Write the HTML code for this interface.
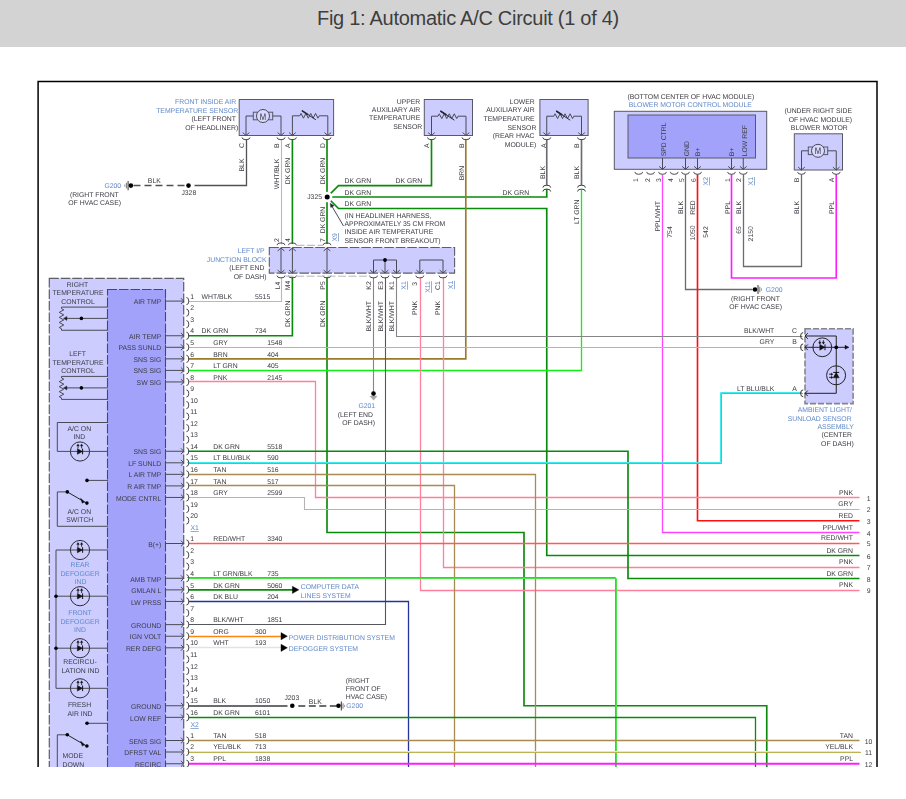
<!DOCTYPE html>
<html><head><meta charset="utf-8"><title>Fig 1: Automatic A/C Circuit (1 of 4)</title>
<style>
html,body{margin:0;padding:0;background:#fff;}
body{width:906px;height:799px;overflow:hidden;position:relative;font-family:"Liberation Sans",sans-serif;}
#hdr{position:absolute;left:0;top:0;width:906px;height:46.5px;background:#d3d3d3;}
#hdr span{position:absolute;left:0;width:936px;top:6px;text-align:center;font-size:20px;line-height:24px;color:#3e3e3e;letter-spacing:-0.28px;white-space:nowrap;}
#dia{position:absolute;left:0;top:0;width:906px;height:767px;overflow:hidden;}
svg{display:block;filter:blur(0.35px);}
</style></head><body>
<div id="hdr"><span>Fig 1: Automatic A/C Circuit (1 of 4)</span></div>
<div id="dia"><svg width="906" height="780" viewBox="0 0 906 780" font-family="Liberation Sans, sans-serif" text-rendering="geometricPrecision">
<g fill="none" stroke-linejoin="miter">
<path d="M246.50 139.50 L246.50 185.50 L194.50 185.50" stroke="#505056" stroke-width="1.3"/>
<path d="M184.50 185.50 L133.50 185.50" stroke="#505056" stroke-width="1.3" stroke-dasharray="7 4"/>
<path d="M281.50 139.50 L281.50 244.50" stroke="#b9b9b9" stroke-width="1.1"/>
<path d="M281.50 277.50 L281.50 301.50 L188.50 301.50" stroke="#b9b9b9" stroke-width="1.1"/>
<path d="M292.40 139.00 L292.40 244.00" stroke="#0a8a0a" stroke-width="1.65"/>
<path d="M292.40 277.00 L292.40 335.75 L188.00 335.75" stroke="#0a8a0a" stroke-width="1.65"/>
<path d="M327.00 139.00 L327.00 244.00" stroke="#0a8a0a" stroke-width="1.65"/>
<path d="M327.00 277.00 L327.00 532.50 L524.00 532.50 L524.00 705.75 L766.75 705.75 L766.75 770.00" stroke="#0a8a0a" stroke-width="1.65"/>
<path d="M327.00 197.00 L338.50 185.60 L431.50 185.60 L431.50 139.00" stroke="#0a8a0a" stroke-width="1.65"/>
<path d="M327.00 197.00 L546.75 197.00 L546.75 189.20" stroke="#0a8a0a" stroke-width="1.65"/>
<path d="M327.00 197.00 L338.50 208.50 L546.75 208.50 L546.75 555.50 L859.50 555.50" stroke="#0a8a0a" stroke-width="1.65"/>
<path d="M465.80 139.00 L465.80 358.85 L188.00 358.85" stroke="#9a7b2c" stroke-width="1.65"/>
<path d="M546.75 139.00 L546.75 185.30" stroke="#6c6c70" stroke-width="1.65"/>
<path d="M581.50 139.00 L581.50 185.30" stroke="#6c6c70" stroke-width="1.65"/>
<path d="M581.50 189.50 L581.50 370.50 L188.50 370.50" stroke="#10f010" stroke-width="1.3"/>
<path d="M662.50 174.50 L662.50 532.50 L859.50 532.50" stroke="#ff45ff" stroke-width="1.3"/>
<path d="M685.50 174.50 L685.50 289.50 L752.50 289.50" stroke="#6c6c70" stroke-width="1.3"/>
<path d="M697.50 174.30 L697.50 520.75 L859.50 520.75" stroke="#ff1010" stroke-width="1.65"/>
<path d="M731.50 174.30 L731.50 278.00 L836.25 278.00 L836.25 174.30" stroke="#ff1cff" stroke-width="1.65"/>
<path d="M743.50 174.50 L743.50 266.50 L801.50 266.50 L801.50 174.50" stroke="#6c6c70" stroke-width="1.3"/>
<path d="M373.50 277.50 L373.50 392.50" stroke="#858588" stroke-width="1.1"/>
<path d="M385.50 277.50 L385.50 624.50 L188.50 624.50" stroke="#56565c" stroke-width="1.1"/>
<path d="M396.50 277.50 L396.50 336.50 L802.50 336.50" stroke="#858588" stroke-width="1.1"/>
<path d="M420.50 277.50 L420.50 590.50 L859.50 590.50" stroke="#ff7f9c" stroke-width="1.3"/>
<path d="M443.50 277.50 L443.50 567.50 L859.50 567.50" stroke="#ff7f9c" stroke-width="1.3"/>
<path d="M188.50 347.50 L802.50 347.50" stroke="#b4b4b4" stroke-width="1.1"/>
<path d="M188.50 381.50 L315.50 381.50 L315.50 497.50 L859.50 497.50" stroke="#ff7f9c" stroke-width="1.3"/>
<path d="M188.00 451.25 L628.00 451.25 L628.00 578.50 L859.50 578.50" stroke="#0a8a0a" stroke-width="1.65"/>
<path d="M187.5 462.5 L720.5 462.5 L720.5 392.5 L801.5 392.5" stroke="#3cecec" stroke-width="1" stroke-linecap="square"/>
<path d="M188.5 463.5 L721.5 463.5 L721.5 393.5 L802.5 393.5" stroke="#66b2ba" stroke-width="1" stroke-linecap="square"/>
<path d="M188.50 474.50 L535.50 474.50 L535.50 770.50" stroke="#a68c50" stroke-width="1.3"/>
<path d="M188.50 485.50 L454.50 485.50 L454.50 770.50" stroke="#a68c50" stroke-width="1.3"/>
<path d="M188.50 497.50 L304.50 497.50 L304.50 509.50 L859.50 509.50" stroke="#b4b4b4" stroke-width="1.1"/>
<path d="M188.50 543.50 L859.50 543.50" stroke="#ff5a5a" stroke-width="1.3"/>
<path d="M187.5 577.5 L615.5 577.5 L615.5 769.5" stroke="#66b05e" stroke-width="1" stroke-linecap="square"/>
<path d="M188.5 578.5 L616.5 578.5 L616.5 770.5" stroke="#46e646" stroke-width="1" stroke-linecap="square"/>
<path d="M188.00 589.86 L294.00 589.86" stroke="#0a8a0a" stroke-width="1.65"/>
<path d="M188.50 601.50 L408.50 601.50 L408.50 770.50" stroke="#24349a" stroke-width="1.3"/>
<path d="M188.50 636.50 L283.50 636.50" stroke="#ff8510" stroke-width="1.3"/>
<path d="M188.50 647.50 L283.50 647.50" stroke="#e2e2e2" stroke-width="1.3"/>
<path d="M188.00 706.00 L287.50 706.00" stroke="#6c6c70" stroke-width="1.98"/>
<path d="M298.30 706.00 L337.00 706.00" stroke="#6c6c70" stroke-width="1.98" stroke-dasharray="7 3.5"/>
<path d="M188.50 717.50 L755.50 717.50 L755.50 770.50" stroke="#0a8a0a" stroke-width="1.3"/>
<path d="M188.50 740.50 L859.50 740.50" stroke="#a68c50" stroke-width="1.3"/>
<path d="M187.5 751.5 L859.5 751.5" stroke="#f6f650" stroke-width="1" stroke-linecap="square"/>
<path d="M188.5 752.5 L860.5 752.5" stroke="#bcb452" stroke-width="1" stroke-linecap="square"/>
<path d="M188.00 763.75 L859.50 763.75" stroke="#ff1cff" stroke-width="1.81"/>
</g>
<g fill="none" stroke="#4a4a55" stroke-width="1">
<rect x="239.20" y="99.50" width="94.40" height="36.00" fill="#ccccff" stroke="#585868" stroke-width="1.0"/>
<rect x="253.30" y="112.20" width="4.50" height="7.60" fill="none" stroke="#585868" stroke-width="1.0"/>
<rect x="268.20" y="112.20" width="4.50" height="7.60" fill="none" stroke="#585868" stroke-width="1.0"/>
<circle cx="263.00" cy="116.00" r="6.5" fill="#dadaff" stroke="#4a4a55" stroke-width="1"/>
<text x="263.00" y="119.50" text-anchor="middle" font-size="9.6" fill="#34344a" stroke="none" textLength="6.4" lengthAdjust="spacingAndGlyphs">M</text>
<path d="M253.30 116.00 H246.00 V135.50" stroke="#4a4a55" stroke-width="1.0" fill="none"/>
<path d="M272.70 116.00 H281.00 V135.50" stroke="#4a4a55" stroke-width="1.0" fill="none"/>
<path d="M242.66 132.60 L246.00 135.50 L249.34 132.60" stroke="#4a4a55" stroke-width="1.0" fill="none"/>
<path d="M277.67 132.60 L281.00 135.50 L284.33 132.60" stroke="#4a4a55" stroke-width="1.0" fill="none"/>
<path d="M292.40 135.50 V115.80 H299.80 L301.01 113.40 L303.44 118.20 L305.86 113.40 L308.29 118.20 L310.71 113.40 L313.14 118.20 L315.56 113.40 L317.99 118.20 L319.20 115.80 H327.80 V135.50" stroke="#4a4a55" stroke-width="1.0" fill="none" stroke-linejoin="miter"/>
<path d="M301.90 110.60 L315.90 119.80" stroke="#2c2c34" stroke-width="1.0" fill="none"/>
<path d="M301.90 110.60 L308.00 114.60" stroke="#26262e" stroke-width="1.5" fill="none"/>
<path d="M289.06 132.60 L292.40 135.50 L295.73 132.60" stroke="#4a4a55" stroke-width="1.0" fill="none"/>
<path d="M324.47 132.60 L327.80 135.50 L331.13 132.60" stroke="#4a4a55" stroke-width="1.0" fill="none"/>
<path d="M242.00 137.40 A4.0 2.3 0 0 0 250.00 137.40" stroke="#4a4a55" stroke-width="1.0" fill="none"/>
<path d="M277.00 137.40 A4.0 2.3 0 0 0 285.00 137.40" stroke="#4a4a55" stroke-width="1.0" fill="none"/>
<path d="M288.40 137.40 A4.0 2.3 0 0 0 296.40 137.40" stroke="#4a4a55" stroke-width="1.0" fill="none"/>
<path d="M323.00 137.40 A4.0 2.3 0 0 0 331.00 137.40" stroke="#4a4a55" stroke-width="1.0" fill="none"/>
<rect x="424.30" y="99.50" width="48.20" height="36.00" fill="#ccccff" stroke="#585868" stroke-width="1.0"/>
<path d="M431.50 135.50 V116.20 H438.00 L439.25 113.80 L441.75 118.60 L444.25 113.80 L446.75 118.60 L449.25 113.80 L451.75 118.60 L454.25 113.80 L456.75 118.60 L458.00 116.20 H466.00 V135.50" stroke="#4a4a55" stroke-width="1.0" fill="none" stroke-linejoin="miter"/>
<path d="M440.40 111.00 L454.40 120.20" stroke="#2c2c34" stroke-width="1.0" fill="none"/>
<path d="M440.40 111.00 L446.50 115.00" stroke="#26262e" stroke-width="1.5" fill="none"/>
<path d="M428.17 132.60 L431.50 135.50 L434.83 132.60" stroke="#4a4a55" stroke-width="1.0" fill="none"/>
<path d="M462.67 132.60 L466.00 135.50 L469.33 132.60" stroke="#4a4a55" stroke-width="1.0" fill="none"/>
<path d="M427.50 137.40 A4.0 2.3 0 0 0 435.50 137.40" stroke="#4a4a55" stroke-width="1.0" fill="none"/>
<path d="M462.00 137.40 A4.0 2.3 0 0 0 470.00 137.40" stroke="#4a4a55" stroke-width="1.0" fill="none"/>
<rect x="539.90" y="99.50" width="48.20" height="36.00" fill="#ccccff" stroke="#585868" stroke-width="1.0"/>
<path d="M546.75 135.50 V116.20 H553.80 L555.05 113.80 L557.55 118.60 L560.05 113.80 L562.55 118.60 L565.05 113.80 L567.55 118.60 L570.05 113.80 L572.55 118.60 L573.80 116.20 H581.50 V135.50" stroke="#4a4a55" stroke-width="1.0" fill="none" stroke-linejoin="miter"/>
<path d="M556.20 111.00 L570.20 120.20" stroke="#2c2c34" stroke-width="1.0" fill="none"/>
<path d="M556.20 111.00 L562.30 115.00" stroke="#26262e" stroke-width="1.5" fill="none"/>
<path d="M543.41 132.60 L546.75 135.50 L550.09 132.60" stroke="#4a4a55" stroke-width="1.0" fill="none"/>
<path d="M578.16 132.60 L581.50 135.50 L584.84 132.60" stroke="#4a4a55" stroke-width="1.0" fill="none"/>
<path d="M542.75 137.40 A4.0 2.3 0 0 0 550.75 137.40" stroke="#4a4a55" stroke-width="1.0" fill="none"/>
<path d="M577.50 137.40 A4.0 2.3 0 0 0 585.50 137.40" stroke="#4a4a55" stroke-width="1.0" fill="none"/>
<path d="M542.85 187.60 A3.9 2.4 0 0 1 550.65 187.60" stroke="#3a3a44" stroke-width="1.0" fill="none"/>
<path d="M542.85 191.50 A3.9 2.4 0 0 1 550.65 191.50" stroke="#3a3a44" stroke-width="1.0" fill="none"/>
<path d="M577.60 187.60 A3.9 2.4 0 0 1 585.40 187.60" stroke="#3a3a44" stroke-width="1.0" fill="none"/>
<path d="M577.60 191.50 A3.9 2.4 0 0 1 585.40 191.50" stroke="#3a3a44" stroke-width="1.0" fill="none"/>
<rect x="614.30" y="111.30" width="152.40" height="58.00" fill="#ccccff" stroke="#585868" stroke-width="1.0"/>
<rect x="628.00" y="115.00" width="127.50" height="43.00" fill="#a2a2fb" stroke="#585868" stroke-width="1.0"/>
<path d="M634.85 171.90 A3.9 2.4 0 0 0 642.65 171.90" stroke="#4a4a55" stroke-width="1.0" fill="none"/>
<path d="M646.70 171.90 A3.9 2.4 0 0 0 654.50 171.90" stroke="#4a4a55" stroke-width="1.0" fill="none"/>
<path d="M658.60 171.90 A3.9 2.4 0 0 0 666.40 171.90" stroke="#4a4a55" stroke-width="1.0" fill="none"/>
<path d="M662.50 158 V169.3" stroke="#4a4a55" stroke-width="1.0" fill="none"/>
<path d="M659.16 166.40 L662.50 169.30 L665.84 166.40" stroke="#4a4a55" stroke-width="1.0" fill="none"/>
<path d="M670.35 171.90 A3.9 2.4 0 0 0 678.15 171.90" stroke="#4a4a55" stroke-width="1.0" fill="none"/>
<path d="M681.60 171.90 A3.9 2.4 0 0 0 689.40 171.90" stroke="#4a4a55" stroke-width="1.0" fill="none"/>
<path d="M685.50 158 V169.3" stroke="#4a4a55" stroke-width="1.0" fill="none"/>
<path d="M682.16 166.40 L685.50 169.30 L688.84 166.40" stroke="#4a4a55" stroke-width="1.0" fill="none"/>
<path d="M693.60 171.90 A3.9 2.4 0 0 0 701.40 171.90" stroke="#4a4a55" stroke-width="1.0" fill="none"/>
<path d="M697.50 158 V169.3" stroke="#4a4a55" stroke-width="1.0" fill="none"/>
<path d="M694.16 166.40 L697.50 169.30 L700.84 166.40" stroke="#4a4a55" stroke-width="1.0" fill="none"/>
<path d="M727.60 171.90 A3.9 2.4 0 0 0 735.40 171.90" stroke="#4a4a55" stroke-width="1.0" fill="none"/>
<path d="M731.50 158 V169.3" stroke="#4a4a55" stroke-width="1.0" fill="none"/>
<path d="M728.16 166.40 L731.50 169.30 L734.84 166.40" stroke="#4a4a55" stroke-width="1.0" fill="none"/>
<path d="M739.35 171.90 A3.9 2.4 0 0 0 747.15 171.90" stroke="#4a4a55" stroke-width="1.0" fill="none"/>
<path d="M743.25 158 V169.3" stroke="#4a4a55" stroke-width="1.0" fill="none"/>
<path d="M739.91 166.40 L743.25 169.30 L746.59 166.40" stroke="#4a4a55" stroke-width="1.0" fill="none"/>
<rect x="794.30" y="133.80" width="48.20" height="36.20" fill="#ccccff" stroke="#585868" stroke-width="1.0"/>
<rect x="808.30" y="147.00" width="4.50" height="7.60" fill="none" stroke="#585868" stroke-width="1.0"/>
<rect x="823.20" y="147.00" width="4.50" height="7.60" fill="none" stroke="#585868" stroke-width="1.0"/>
<circle cx="818.00" cy="150.80" r="6.5" fill="#dadaff" stroke="#4a4a55" stroke-width="1"/>
<text x="818.00" y="154.30" text-anchor="middle" font-size="9.6" fill="#34344a" stroke="none" textLength="6.4" lengthAdjust="spacingAndGlyphs">M</text>
<path d="M808.30 150.80 H801.50 V170.00" stroke="#4a4a55" stroke-width="1.0" fill="none"/>
<path d="M827.70 150.80 H836.25 V170.00" stroke="#4a4a55" stroke-width="1.0" fill="none"/>
<path d="M798.16 167.10 L801.50 170.00 L804.84 167.10" stroke="#4a4a55" stroke-width="1.0" fill="none"/>
<path d="M832.91 167.10 L836.25 170.00 L839.59 167.10" stroke="#4a4a55" stroke-width="1.0" fill="none"/>
<path d="M797.60 171.90 A3.9 2.4 0 0 0 805.40 171.90" stroke="#4a4a55" stroke-width="1.0" fill="none"/>
<path d="M832.35 171.90 A3.9 2.4 0 0 0 840.15 171.90" stroke="#4a4a55" stroke-width="1.0" fill="none"/>
<rect x="269.30" y="247.50" width="185.30" height="25.60" fill="#ccccff" stroke="#5e5e68" stroke-width="1.1" stroke-dasharray="9.5 2"/>
<path d="M281.00 248 V273" stroke="#4a4a55" stroke-width="1.0" fill="none"/>
<path d="M277.67 250.90 L281.00 248.00 L284.33 250.90" stroke="#4a4a55" stroke-width="1.0" fill="none"/>
<path d="M277.67 270.10 L281.00 273.00 L284.33 270.10" stroke="#4a4a55" stroke-width="1.0" fill="none"/>
<path d="M277.00 245.20 A4.0 2.3 0 0 1 285.00 245.20" stroke="#4a4a55" stroke-width="1.0" fill="none"/>
<path d="M277.00 275.60 A4.0 2.3 0 0 0 285.00 275.60" stroke="#4a4a55" stroke-width="1.0" fill="none"/>
<path d="M292.40 248 V273" stroke="#4a4a55" stroke-width="1.0" fill="none"/>
<path d="M289.06 250.90 L292.40 248.00 L295.73 250.90" stroke="#4a4a55" stroke-width="1.0" fill="none"/>
<path d="M289.06 270.10 L292.40 273.00 L295.73 270.10" stroke="#4a4a55" stroke-width="1.0" fill="none"/>
<path d="M288.40 245.20 A4.0 2.3 0 0 1 296.40 245.20" stroke="#4a4a55" stroke-width="1.0" fill="none"/>
<path d="M288.40 275.60 A4.0 2.3 0 0 0 296.40 275.60" stroke="#4a4a55" stroke-width="1.0" fill="none"/>
<path d="M327.00 248 V273" stroke="#4a4a55" stroke-width="1.0" fill="none"/>
<path d="M323.67 250.90 L327.00 248.00 L330.33 250.90" stroke="#4a4a55" stroke-width="1.0" fill="none"/>
<path d="M323.67 270.10 L327.00 273.00 L330.33 270.10" stroke="#4a4a55" stroke-width="1.0" fill="none"/>
<path d="M323.00 245.20 A4.0 2.3 0 0 1 331.00 245.20" stroke="#4a4a55" stroke-width="1.0" fill="none"/>
<path d="M323.00 275.60 A4.0 2.3 0 0 0 331.00 275.60" stroke="#4a4a55" stroke-width="1.0" fill="none"/>
<path d="M373.5 273 V260 H396.5 V273" stroke="#4a4a55" stroke-width="1.0" fill="none"/>
<path d="M385 260 V273" stroke="#4a4a55" stroke-width="1.0" fill="none"/>
<path d="M419.8 273 V260 H443 V273" stroke="#4a4a55" stroke-width="1.0" fill="none"/>
<path d="M370.17 270.10 L373.50 273.00 L376.83 270.10" stroke="#4a4a55" stroke-width="1.0" fill="none"/>
<path d="M369.50 275.60 A4.0 2.3 0 0 0 377.50 275.60" stroke="#4a4a55" stroke-width="1.0" fill="none"/>
<path d="M381.67 270.10 L385.00 273.00 L388.33 270.10" stroke="#4a4a55" stroke-width="1.0" fill="none"/>
<path d="M381.00 275.60 A4.0 2.3 0 0 0 389.00 275.60" stroke="#4a4a55" stroke-width="1.0" fill="none"/>
<path d="M393.17 270.10 L396.50 273.00 L399.83 270.10" stroke="#4a4a55" stroke-width="1.0" fill="none"/>
<path d="M392.50 275.60 A4.0 2.3 0 0 0 400.50 275.60" stroke="#4a4a55" stroke-width="1.0" fill="none"/>
<path d="M416.47 270.10 L419.80 273.00 L423.13 270.10" stroke="#4a4a55" stroke-width="1.0" fill="none"/>
<path d="M415.80 275.60 A4.0 2.3 0 0 0 423.80 275.60" stroke="#4a4a55" stroke-width="1.0" fill="none"/>
<path d="M439.67 270.10 L443.00 273.00 L446.33 270.10" stroke="#4a4a55" stroke-width="1.0" fill="none"/>
<path d="M439.00 275.60 A4.0 2.3 0 0 0 447.00 275.60" stroke="#4a4a55" stroke-width="1.0" fill="none"/>
<path d="M296.5 245.3 H323" stroke="#b0b0b0" stroke-width="1.0" fill="none" stroke-dasharray="8 2.5"/>
<path d="M285.5 276.2 H369" stroke="#b8b8b8" stroke-width="1.0" fill="none" stroke-dasharray="8 2.5"/>
</g>
<circle cx="385.00" cy="260.00" r="1.9" fill="#000" stroke="none"/>
<circle cx="327.20" cy="197.00" r="5.2" fill="#fff" stroke="none"/>
<circle cx="327.20" cy="197.00" r="2.5" fill="#000" stroke="none"/>
<path d="M343.5 226 L331.2 205" stroke="#4a4a55" stroke-width="1.0" fill="none"/>
<path d="M330.2 203.3 L330.8 207.6 L334 205.7 Z" stroke="#222" stroke-width="0.4" fill="#222"/>
<circle cx="188.50" cy="185.60" r="2.3" fill="#000" stroke="none"/>
<circle cx="130.90" cy="185.60" r="2.3" fill="#000" stroke="none"/>
<path d="M128.1 181 V190.2" stroke="#333" stroke-width="1.0" fill="none"/>
<path d="M126.4 182.8 V188.4" stroke="#666" stroke-width="0.9" fill="none"/>
<path d="M124.8 184.4 V186.8" stroke="#888" stroke-width="0.8" fill="none"/>
<circle cx="755.00" cy="289.50" r="2.3" fill="#000" stroke="none"/>
<path d="M758 285 V294" stroke="#333" stroke-width="1.0" fill="none"/>
<path d="M759.8 286.8 V292.2" stroke="#666" stroke-width="0.9" fill="none"/>
<path d="M761.5 288.3 V290.7" stroke="#888" stroke-width="0.8" fill="none"/>
<circle cx="292.30" cy="705.76" r="2.3" fill="#000" stroke="none"/>
<circle cx="338.50" cy="705.76" r="2.3" fill="#000" stroke="none"/>
<path d="M341.3 701.5 V710.5" stroke="#333" stroke-width="1.0" fill="none"/>
<path d="M343 703.3 V708.7" stroke="#666" stroke-width="0.9" fill="none"/>
<path d="M344.6 704.8 V707.2" stroke="#888" stroke-width="0.8" fill="none"/>
<circle cx="373.50" cy="393.60" r="2.3" fill="#000" stroke="none"/>
<path d="M369.8 396 H377.2 L373.5 400.2 Z" stroke="#999" stroke-width="0.3" fill="#a8a8a8"/>
<g fill="none" stroke="#4a4a55" stroke-width="1">
<rect x="49.30" y="278.30" width="134.40" height="520.00" fill="#ccccff" stroke="#5e5e68" stroke-width="1.2" stroke-dasharray="9.5 2"/>
<rect x="107.50" y="289.50" width="58.00" height="520.00" fill="#a2a2fb" stroke="#4a4a55" stroke-width="1.1" stroke-dasharray="9.5 2"/>
<path d="M186.40 297.50 A2.4 3.6 0 0 1 186.40 304.70" stroke="#4a4a55" stroke-width="1.0" fill="none"/>
<path d="M165.5 301.10 H183.6 M165.5 298.80 v4.6" stroke="#4a4a55" stroke-width="1.0" fill="none"/>
<path d="M180.90 298.20 L183.80 301.10 L180.90 304.00" stroke="#4a4a55" stroke-width="1.0" fill="none"/>
<path d="M186.40 309.05 A2.4 3.6 0 0 1 186.40 316.25" stroke="#4a4a55" stroke-width="1.0" fill="none"/>
<path d="M186.40 320.60 A2.4 3.6 0 0 1 186.40 327.80" stroke="#4a4a55" stroke-width="1.0" fill="none"/>
<path d="M186.40 332.15 A2.4 3.6 0 0 1 186.40 339.35" stroke="#4a4a55" stroke-width="1.0" fill="none"/>
<path d="M165.5 335.75 H183.6 M165.5 333.45 v4.6" stroke="#4a4a55" stroke-width="1.0" fill="none"/>
<path d="M180.90 332.85 L183.80 335.75 L180.90 338.65" stroke="#4a4a55" stroke-width="1.0" fill="none"/>
<path d="M186.40 343.70 A2.4 3.6 0 0 1 186.40 350.90" stroke="#4a4a55" stroke-width="1.0" fill="none"/>
<path d="M165.5 347.30 H183.6 M165.5 345.00 v4.6" stroke="#4a4a55" stroke-width="1.0" fill="none"/>
<path d="M180.90 344.40 L183.80 347.30 L180.90 350.20" stroke="#4a4a55" stroke-width="1.0" fill="none"/>
<path d="M186.40 355.25 A2.4 3.6 0 0 1 186.40 362.45" stroke="#4a4a55" stroke-width="1.0" fill="none"/>
<path d="M165.5 358.85 H183.6 M165.5 356.55 v4.6" stroke="#4a4a55" stroke-width="1.0" fill="none"/>
<path d="M180.90 355.95 L183.80 358.85 L180.90 361.75" stroke="#4a4a55" stroke-width="1.0" fill="none"/>
<path d="M186.40 366.80 A2.4 3.6 0 0 1 186.40 374.00" stroke="#4a4a55" stroke-width="1.0" fill="none"/>
<path d="M165.5 370.40 H183.6 M165.5 368.10 v4.6" stroke="#4a4a55" stroke-width="1.0" fill="none"/>
<path d="M180.90 367.50 L183.80 370.40 L180.90 373.30" stroke="#4a4a55" stroke-width="1.0" fill="none"/>
<path d="M186.40 378.35 A2.4 3.6 0 0 1 186.40 385.55" stroke="#4a4a55" stroke-width="1.0" fill="none"/>
<path d="M165.5 381.95 H183.6 M165.5 379.65 v4.6" stroke="#4a4a55" stroke-width="1.0" fill="none"/>
<path d="M180.90 379.05 L183.80 381.95 L180.90 384.85" stroke="#4a4a55" stroke-width="1.0" fill="none"/>
<path d="M186.40 389.90 A2.4 3.6 0 0 1 186.40 397.10" stroke="#4a4a55" stroke-width="1.0" fill="none"/>
<path d="M186.40 401.45 A2.4 3.6 0 0 1 186.40 408.65" stroke="#4a4a55" stroke-width="1.0" fill="none"/>
<path d="M186.40 413.00 A2.4 3.6 0 0 1 186.40 420.20" stroke="#4a4a55" stroke-width="1.0" fill="none"/>
<path d="M186.40 424.55 A2.4 3.6 0 0 1 186.40 431.75" stroke="#4a4a55" stroke-width="1.0" fill="none"/>
<path d="M186.40 436.10 A2.4 3.6 0 0 1 186.40 443.30" stroke="#4a4a55" stroke-width="1.0" fill="none"/>
<path d="M186.40 447.65 A2.4 3.6 0 0 1 186.40 454.85" stroke="#4a4a55" stroke-width="1.0" fill="none"/>
<path d="M165.5 451.25 H183.6 M165.5 448.95 v4.6" stroke="#4a4a55" stroke-width="1.0" fill="none"/>
<path d="M180.90 448.35 L183.80 451.25 L180.90 454.15" stroke="#4a4a55" stroke-width="1.0" fill="none"/>
<path d="M186.40 459.20 A2.4 3.6 0 0 1 186.40 466.40" stroke="#4a4a55" stroke-width="1.0" fill="none"/>
<path d="M165.5 462.80 H183.6 M165.5 460.50 v4.6" stroke="#4a4a55" stroke-width="1.0" fill="none"/>
<path d="M180.90 459.90 L183.80 462.80 L180.90 465.70" stroke="#4a4a55" stroke-width="1.0" fill="none"/>
<path d="M186.40 470.75 A2.4 3.6 0 0 1 186.40 477.95" stroke="#4a4a55" stroke-width="1.0" fill="none"/>
<path d="M165.5 474.35 H183.6 M165.5 472.05 v4.6" stroke="#4a4a55" stroke-width="1.0" fill="none"/>
<path d="M180.90 471.45 L183.80 474.35 L180.90 477.25" stroke="#4a4a55" stroke-width="1.0" fill="none"/>
<path d="M186.40 482.30 A2.4 3.6 0 0 1 186.40 489.50" stroke="#4a4a55" stroke-width="1.0" fill="none"/>
<path d="M165.5 485.90 H183.6 M165.5 483.60 v4.6" stroke="#4a4a55" stroke-width="1.0" fill="none"/>
<path d="M180.90 483.00 L183.80 485.90 L180.90 488.80" stroke="#4a4a55" stroke-width="1.0" fill="none"/>
<path d="M186.40 493.85 A2.4 3.6 0 0 1 186.40 501.05" stroke="#4a4a55" stroke-width="1.0" fill="none"/>
<path d="M165.5 497.45 H183.6 M165.5 495.15 v4.6" stroke="#4a4a55" stroke-width="1.0" fill="none"/>
<path d="M180.90 494.55 L183.80 497.45 L180.90 500.35" stroke="#4a4a55" stroke-width="1.0" fill="none"/>
<path d="M186.40 505.40 A2.4 3.6 0 0 1 186.40 512.60" stroke="#4a4a55" stroke-width="1.0" fill="none"/>
<path d="M186.40 516.95 A2.4 3.6 0 0 1 186.40 524.15" stroke="#4a4a55" stroke-width="1.0" fill="none"/>
<path d="M186.40 539.90 A2.4 3.6 0 0 1 186.40 547.10" stroke="#4a4a55" stroke-width="1.0" fill="none"/>
<path d="M165.5 543.50 H183.6 M165.5 541.20 v4.6" stroke="#4a4a55" stroke-width="1.0" fill="none"/>
<path d="M180.90 540.60 L183.80 543.50 L180.90 546.40" stroke="#4a4a55" stroke-width="1.0" fill="none"/>
<path d="M186.40 551.49 A2.4 3.6 0 0 1 186.40 558.69" stroke="#4a4a55" stroke-width="1.0" fill="none"/>
<path d="M186.40 563.08 A2.4 3.6 0 0 1 186.40 570.28" stroke="#4a4a55" stroke-width="1.0" fill="none"/>
<path d="M186.40 574.67 A2.4 3.6 0 0 1 186.40 581.87" stroke="#4a4a55" stroke-width="1.0" fill="none"/>
<path d="M165.5 578.27 H183.6 M165.5 575.97 v4.6" stroke="#4a4a55" stroke-width="1.0" fill="none"/>
<path d="M180.90 575.37 L183.80 578.27 L180.90 581.17" stroke="#4a4a55" stroke-width="1.0" fill="none"/>
<path d="M186.40 586.26 A2.4 3.6 0 0 1 186.40 593.46" stroke="#4a4a55" stroke-width="1.0" fill="none"/>
<path d="M165.5 589.86 H183.6 M165.5 587.56 v4.6" stroke="#4a4a55" stroke-width="1.0" fill="none"/>
<path d="M180.90 586.96 L183.80 589.86 L180.90 592.76" stroke="#4a4a55" stroke-width="1.0" fill="none"/>
<path d="M186.40 597.85 A2.4 3.6 0 0 1 186.40 605.05" stroke="#4a4a55" stroke-width="1.0" fill="none"/>
<path d="M165.5 601.45 H183.6 M165.5 599.15 v4.6" stroke="#4a4a55" stroke-width="1.0" fill="none"/>
<path d="M180.90 598.55 L183.80 601.45 L180.90 604.35" stroke="#4a4a55" stroke-width="1.0" fill="none"/>
<path d="M186.40 609.44 A2.4 3.6 0 0 1 186.40 616.64" stroke="#4a4a55" stroke-width="1.0" fill="none"/>
<path d="M186.40 621.03 A2.4 3.6 0 0 1 186.40 628.23" stroke="#4a4a55" stroke-width="1.0" fill="none"/>
<path d="M165.5 624.63 H183.6 M165.5 622.33 v4.6" stroke="#4a4a55" stroke-width="1.0" fill="none"/>
<path d="M180.90 621.73 L183.80 624.63 L180.90 627.53" stroke="#4a4a55" stroke-width="1.0" fill="none"/>
<path d="M186.40 632.62 A2.4 3.6 0 0 1 186.40 639.82" stroke="#4a4a55" stroke-width="1.0" fill="none"/>
<path d="M165.5 636.22 H183.6 M165.5 633.92 v4.6" stroke="#4a4a55" stroke-width="1.0" fill="none"/>
<path d="M180.90 633.32 L183.80 636.22 L180.90 639.12" stroke="#4a4a55" stroke-width="1.0" fill="none"/>
<path d="M186.40 644.21 A2.4 3.6 0 0 1 186.40 651.41" stroke="#4a4a55" stroke-width="1.0" fill="none"/>
<path d="M165.5 647.81 H183.6 M165.5 645.51 v4.6" stroke="#4a4a55" stroke-width="1.0" fill="none"/>
<path d="M180.90 644.91 L183.80 647.81 L180.90 650.71" stroke="#4a4a55" stroke-width="1.0" fill="none"/>
<path d="M186.40 655.80 A2.4 3.6 0 0 1 186.40 663.00" stroke="#4a4a55" stroke-width="1.0" fill="none"/>
<path d="M186.40 667.39 A2.4 3.6 0 0 1 186.40 674.59" stroke="#4a4a55" stroke-width="1.0" fill="none"/>
<path d="M186.40 678.98 A2.4 3.6 0 0 1 186.40 686.18" stroke="#4a4a55" stroke-width="1.0" fill="none"/>
<path d="M186.40 690.57 A2.4 3.6 0 0 1 186.40 697.77" stroke="#4a4a55" stroke-width="1.0" fill="none"/>
<path d="M186.40 702.16 A2.4 3.6 0 0 1 186.40 709.36" stroke="#4a4a55" stroke-width="1.0" fill="none"/>
<path d="M165.5 705.76 H183.6 M165.5 703.46 v4.6" stroke="#4a4a55" stroke-width="1.0" fill="none"/>
<path d="M180.90 702.86 L183.80 705.76 L180.90 708.66" stroke="#4a4a55" stroke-width="1.0" fill="none"/>
<path d="M186.40 713.75 A2.4 3.6 0 0 1 186.40 720.95" stroke="#4a4a55" stroke-width="1.0" fill="none"/>
<path d="M165.5 717.35 H183.6 M165.5 715.05 v4.6" stroke="#4a4a55" stroke-width="1.0" fill="none"/>
<path d="M180.90 714.45 L183.80 717.35 L180.90 720.25" stroke="#4a4a55" stroke-width="1.0" fill="none"/>
<path d="M186.40 736.90 A2.4 3.6 0 0 1 186.40 744.10" stroke="#4a4a55" stroke-width="1.0" fill="none"/>
<path d="M165.5 740.50 H183.6 M165.5 738.20 v4.6" stroke="#4a4a55" stroke-width="1.0" fill="none"/>
<path d="M180.90 737.60 L183.80 740.50 L180.90 743.40" stroke="#4a4a55" stroke-width="1.0" fill="none"/>
<path d="M186.40 748.40 A2.4 3.6 0 0 1 186.40 755.60" stroke="#4a4a55" stroke-width="1.0" fill="none"/>
<path d="M165.5 752.00 H183.6 M165.5 749.70 v4.6" stroke="#4a4a55" stroke-width="1.0" fill="none"/>
<path d="M180.90 749.10 L183.80 752.00 L180.90 754.90" stroke="#4a4a55" stroke-width="1.0" fill="none"/>
<path d="M186.40 760.15 A2.4 3.6 0 0 1 186.40 767.35" stroke="#4a4a55" stroke-width="1.0" fill="none"/>
<path d="M165.5 763.75 H183.6 M165.5 761.45 v4.6" stroke="#4a4a55" stroke-width="1.0" fill="none"/>
<path d="M180.90 760.85 L183.80 763.75 L180.90 766.65" stroke="#4a4a55" stroke-width="1.0" fill="none"/>
<path d="M108 307.10 H61.50 v1.5 l2.3 1.26 l-4.60 2.52 l4.60 2.52 l-4.60 2.52 l4.60 2.52 l-4.60 2.52 l4.60 2.52 l-4.60 2.52 l2.30 1.26 v1.5 H108" stroke="#4a4a55" stroke-width="1.0" fill="none"/>
<path d="M108 318.40 H65" stroke="#4a4a55" stroke-width="1.0" fill="none"/>
<path d="M66.9 316.40 L63.5 318.40 L66.9 320.40 Z" stroke="#222" stroke-width="0.4" fill="#222"/>
<path d="M108 376.40 H61.50 v1.5 l2.3 1.25 l-4.60 2.50 l4.60 2.50 l-4.60 2.50 l4.60 2.50 l-4.60 2.50 l4.60 2.50 l-4.60 2.50 l2.30 1.25 v1.5 H108" stroke="#4a4a55" stroke-width="1.0" fill="none"/>
<path d="M108 387.90 H65" stroke="#4a4a55" stroke-width="1.0" fill="none"/>
<path d="M66.9 385.90 L63.5 387.90 L66.9 389.90 Z" stroke="#222" stroke-width="0.4" fill="#222"/>
<path d="M108 422.5 H57.3 V451.4 H108" stroke="#4a4a55" stroke-width="1.0" fill="none"/>
<path d="M87 480.4 H108" stroke="#4a4a55" stroke-width="1.0" fill="none"/>
<path d="M108 526.3 H57.3 V491.9 H67.3" stroke="#4a4a55" stroke-width="1.0" fill="none"/>
<path d="M67.3 491.9 L85.8 502.7" stroke="#222" stroke-width="1.0" fill="none"/>
<path d="M108 550 H56 V688.3 H108" stroke="#4a4a55" stroke-width="1.0" fill="none"/>
<path d="M56 596.2 H108" stroke="#4a4a55" stroke-width="1.0" fill="none"/>
<path d="M56 648.2 H108" stroke="#4a4a55" stroke-width="1.0" fill="none"/>
<path d="M87 723.3 H108" stroke="#4a4a55" stroke-width="1.0" fill="none"/>
<path d="M57.3 800 V734.8 H67.3" stroke="#4a4a55" stroke-width="1.0" fill="none"/>
<path d="M67.3 734.8 L85.8 745.6" stroke="#222" stroke-width="1.0" fill="none"/>
</g>
<circle cx="81.40" cy="318.40" r="1.8" fill="#000" stroke="none"/>
<circle cx="81.40" cy="387.90" r="1.8" fill="#000" stroke="none"/>
<circle cx="87.00" cy="480.40" r="1.8" fill="#000" stroke="none"/>
<circle cx="67.30" cy="491.90" r="1.8" fill="#000" stroke="none"/>
<circle cx="86.90" cy="503.10" r="1.8" fill="#000" stroke="none"/>
<path d="M80.6 498.2 L84.6 501.9 L82.2 503.2 Z" stroke="#111" stroke-width="0.4" fill="#111"/>
<circle cx="56.00" cy="596.20" r="1.8" fill="#000" stroke="none"/>
<circle cx="56.00" cy="648.20" r="1.8" fill="#000" stroke="none"/>
<circle cx="87.00" cy="723.30" r="1.8" fill="#000" stroke="none"/>
<circle cx="67.30" cy="734.80" r="1.8" fill="#000" stroke="none"/>
<circle cx="86.90" cy="746.00" r="1.8" fill="#000" stroke="none"/>
<path d="M80.6 741.1 L84.6 744.8 L82.2 746.1 Z" stroke="#111" stroke-width="0.4" fill="#111"/>
<circle cx="80.00" cy="451.50" r="9.6" fill="none" stroke="#2e2e36" stroke-width="1"/>
<path d="M77.40 448.70 L82.40 451.50 L77.40 454.30 Z" stroke="#111" stroke-width="0.5" fill="#111"/>
<path d="M82.60 448.70 V454.30" stroke="#111" stroke-width="1.0" fill="none"/>
<path d="M78.00 448.30 V444.70" stroke="#111" stroke-width="0.8" fill="none"/>
<path d="M76.70 445.90 L78.00 443.90 L79.30 445.90 Z" stroke="#111" stroke-width="0.3" fill="#111"/>
<path d="M81.60 448.30 V444.70" stroke="#111" stroke-width="0.8" fill="none"/>
<path d="M80.30 445.90 L81.60 443.90 L82.90 445.90 Z" stroke="#111" stroke-width="0.3" fill="#111"/>
<circle cx="80.00" cy="550.00" r="9.6" fill="none" stroke="#2e2e36" stroke-width="1"/>
<path d="M77.40 547.20 L82.40 550.00 L77.40 552.80 Z" stroke="#111" stroke-width="0.5" fill="#111"/>
<path d="M82.60 547.20 V552.80" stroke="#111" stroke-width="1.0" fill="none"/>
<path d="M78.00 546.80 V543.20" stroke="#111" stroke-width="0.8" fill="none"/>
<path d="M76.70 544.40 L78.00 542.40 L79.30 544.40 Z" stroke="#111" stroke-width="0.3" fill="#111"/>
<path d="M81.60 546.80 V543.20" stroke="#111" stroke-width="0.8" fill="none"/>
<path d="M80.30 544.40 L81.60 542.40 L82.90 544.40 Z" stroke="#111" stroke-width="0.3" fill="#111"/>
<circle cx="80.00" cy="596.20" r="9.6" fill="none" stroke="#2e2e36" stroke-width="1"/>
<path d="M77.40 593.40 L82.40 596.20 L77.40 599.00 Z" stroke="#111" stroke-width="0.5" fill="#111"/>
<path d="M82.60 593.40 V599.00" stroke="#111" stroke-width="1.0" fill="none"/>
<path d="M78.00 593.00 V589.40" stroke="#111" stroke-width="0.8" fill="none"/>
<path d="M76.70 590.60 L78.00 588.60 L79.30 590.60 Z" stroke="#111" stroke-width="0.3" fill="#111"/>
<path d="M81.60 593.00 V589.40" stroke="#111" stroke-width="0.8" fill="none"/>
<path d="M80.30 590.60 L81.60 588.60 L82.90 590.60 Z" stroke="#111" stroke-width="0.3" fill="#111"/>
<circle cx="80.00" cy="648.20" r="9.6" fill="none" stroke="#2e2e36" stroke-width="1"/>
<path d="M77.40 645.40 L82.40 648.20 L77.40 651.00 Z" stroke="#111" stroke-width="0.5" fill="#111"/>
<path d="M82.60 645.40 V651.00" stroke="#111" stroke-width="1.0" fill="none"/>
<path d="M78.00 645.00 V641.40" stroke="#111" stroke-width="0.8" fill="none"/>
<path d="M76.70 642.60 L78.00 640.60 L79.30 642.60 Z" stroke="#111" stroke-width="0.3" fill="#111"/>
<path d="M81.60 645.00 V641.40" stroke="#111" stroke-width="0.8" fill="none"/>
<path d="M80.30 642.60 L81.60 640.60 L82.90 642.60 Z" stroke="#111" stroke-width="0.3" fill="#111"/>
<circle cx="80.00" cy="688.30" r="9.6" fill="none" stroke="#2e2e36" stroke-width="1"/>
<path d="M77.40 685.50 L82.40 688.30 L77.40 691.10 Z" stroke="#111" stroke-width="0.5" fill="#111"/>
<path d="M82.60 685.50 V691.10" stroke="#111" stroke-width="1.0" fill="none"/>
<path d="M78.00 685.10 V681.50" stroke="#111" stroke-width="0.8" fill="none"/>
<path d="M76.70 682.70 L78.00 680.70 L79.30 682.70 Z" stroke="#111" stroke-width="0.3" fill="#111"/>
<path d="M81.60 685.10 V681.50" stroke="#111" stroke-width="0.8" fill="none"/>
<path d="M80.30 682.70 L81.60 680.70 L82.90 682.70 Z" stroke="#111" stroke-width="0.3" fill="#111"/>
<g fill="none" stroke="#4a4a55" stroke-width="1">
<rect x="805.00" y="328.80" width="48.10" height="74.80" fill="#ccccff" stroke="#85858c" stroke-width="1.6" stroke-dasharray="6 2"/>
<path d="M805 336 H836.25 V393.3 H805" stroke="#222" stroke-width="1.0" fill="none"/>
<path d="M805 347.3 H845" stroke="#222" stroke-width="1.0" fill="none"/>
<path d="M803.20 332.60 A2.6 3.4 0 0 0 803.20 339.40" stroke="#333" stroke-width="1.0" fill="none"/>
<path d="M807.80 333.20 L805.00 336.00 L807.80 338.80" stroke="#222" stroke-width="1.0" fill="none"/>
<path d="M803.20 343.90 A2.6 3.4 0 0 0 803.20 350.70" stroke="#333" stroke-width="1.0" fill="none"/>
<path d="M807.80 344.50 L805.00 347.30 L807.80 350.10" stroke="#222" stroke-width="1.0" fill="none"/>
<path d="M803.20 389.90 A2.6 3.4 0 0 0 803.20 396.70" stroke="#333" stroke-width="1.0" fill="none"/>
<path d="M807.80 390.50 L805.00 393.30 L807.80 396.10" stroke="#222" stroke-width="1.0" fill="none"/>
</g>
<path d="M849 347.3 L845 345.3 V349.3 Z" stroke="#111" stroke-width="0.4" fill="#111"/>
<circle cx="836.25" cy="347.30" r="1.9" fill="#000" stroke="none"/>
<circle cx="822.3" cy="347.3" r="9.4" fill="none" stroke="#222" stroke-width="1"/>
<path d="M819.8 344.4 L824.8 347.3 L819.8 350.2 Z" stroke="#111" stroke-width="0.5" fill="#111"/>
<path d="M825 344.4 V350.2" stroke="#111" stroke-width="1.0" fill="none"/>
<path d="M819.8 340.2 V343.6" stroke="#111" stroke-width="0.8" fill="none"/>
<path d="M818.5 342.2 L819.8 344.2 L821.0999999999999 342.2 Z" stroke="#111" stroke-width="0.3" fill="#111"/>
<path d="M823.4 340.2 V343.6" stroke="#111" stroke-width="0.8" fill="none"/>
<path d="M822.1 342.2 L823.4 344.2 L824.6999999999999 342.2 Z" stroke="#111" stroke-width="0.3" fill="#111"/>
<circle cx="836.1" cy="375.3" r="9.5" fill="#ccccff" stroke="#222" stroke-width="1"/>
<path d="M836.25 365.8 V384.8" stroke="#222" stroke-width="1.0" fill="none"/>
<path d="M833.2 377.8 L836.2 372.6 L839.2 377.8 Z" stroke="#111" stroke-width="0.5" fill="#111"/>
<path d="M833.2 372.4 H839.2" stroke="#111" stroke-width="1.0" fill="none"/>
<path d="M829 374.2 H832" stroke="#111" stroke-width="0.8" fill="none"/>
<path d="M831.2 372.9 L833 374.2 L831.2 375.5 Z" stroke="#111" stroke-width="0.3" fill="#111"/>
<path d="M829 377.4 H832" stroke="#111" stroke-width="0.8" fill="none"/>
<path d="M831.2 376.09999999999997 L833 377.4 L831.2 378.7 Z" stroke="#111" stroke-width="0.3" fill="#111"/>
<path d="M298.80 589.86 L292.40 586.26 V593.46 Z" stroke="#000" stroke-width="0.4" fill="#000"/>
<path d="M287.40 636.22 L281.00 632.62 V639.82 Z" stroke="#000" stroke-width="0.4" fill="#000"/>
<path d="M287.40 647.81 L281.00 644.21 V651.41 Z" stroke="#000" stroke-width="0.4" fill="#000"/>
<g font-family="Liberation Sans, sans-serif" font-size="6.85" fill="#3c3c44" stroke="none">
<text x="236.20" y="104.00" text-anchor="end" fill="#6089ca">FRONT INSIDE AIR</text>
<text x="238.20" y="113.00" text-anchor="end" fill="#6089ca">TEMPERATURE SENSOR</text>
<text x="235.90" y="121.00" text-anchor="end">(LEFT FRONT</text>
<text x="238.20" y="130.00" text-anchor="end">OF HEADLINER)</text>
<text x="121.20" y="188.00" text-anchor="end" fill="#6089ca">G200</text>
<text x="118.80" y="197.00" text-anchor="end">(RIGHT FRONT</text>
<text x="121.00" y="205.00" text-anchor="end">OF HVAC CASE)</text>
<text x="154.30" y="183.00" text-anchor="middle">BLK</text>
<text x="188.80" y="195.00" text-anchor="middle">J328</text>
<text transform="translate(244.00 145.60) rotate(-90)" text-anchor="middle">C</text>
<text transform="translate(279.00 145.60) rotate(-90)" text-anchor="middle">B</text>
<text transform="translate(290.00 145.60) rotate(-90)" text-anchor="middle">A</text>
<text transform="translate(325.00 145.60) rotate(-90)" text-anchor="middle">D</text>
<text transform="translate(244.00 165.00) rotate(-90)" text-anchor="middle">BLK</text>
<text transform="translate(279.00 174.00) rotate(-90)" text-anchor="middle">WHT/BLK</text>
<text transform="translate(290.00 171.00) rotate(-90)" text-anchor="middle">DK GRN</text>
<text transform="translate(325.00 171.00) rotate(-90)" text-anchor="middle">DK GRN</text>
<text transform="translate(325.00 220.00) rotate(-90)" text-anchor="middle">DK GRN</text>
<text transform="translate(279.00 240.00) rotate(-90)" text-anchor="middle">2</text>
<text transform="translate(290.00 240.00) rotate(-90)" text-anchor="middle">4</text>
<text transform="translate(325.00 240.00) rotate(-90)" text-anchor="middle">7</text>
<text transform="translate(337.00 237.30) rotate(-90)" text-anchor="middle" fill="#6089ca" text-decoration="underline">X9</text>
<text x="322.00" y="199.00" text-anchor="end">J325</text>
<text x="344.50" y="183.00">DK GRN</text>
<text x="395.50" y="183.00">DK GRN</text>
<text x="344.50" y="195.00">DK GRN</text>
<text x="344.50" y="206.00">DK GRN</text>
<text x="344.50" y="218.00">(IN HEADLINER HARNESS,</text>
<text x="344.50" y="226.00">APPROXIMATELY 35 CM FROM</text>
<text x="344.50" y="234.00">INSIDE AIR TEMPERATURE</text>
<text x="344.50" y="243.00">SENSOR FRONT BREAKOUT)</text>
<text x="420.30" y="104.00" text-anchor="end">UPPER</text>
<text x="420.30" y="112.00" text-anchor="end">AUXILIARY AIR</text>
<text x="420.30" y="120.00" text-anchor="end">TEMPERATURE</text>
<text x="422.20" y="129.00" text-anchor="end">SENSOR</text>
<text transform="translate(429.00 145.60) rotate(-90)" text-anchor="middle">A</text>
<text transform="translate(464.00 145.60) rotate(-90)" text-anchor="middle">B</text>
<text transform="translate(464.00 173.00) rotate(-90)" text-anchor="middle">BRN</text>
<text x="534.70" y="104.00" text-anchor="end">LOWER</text>
<text x="534.70" y="112.00" text-anchor="end">AUXILIARY AIR</text>
<text x="534.70" y="121.00" text-anchor="end">TEMPERATURE</text>
<text x="536.40" y="130.00" text-anchor="end">SENSOR</text>
<text x="534.40" y="138.00" text-anchor="end">(REAR HVAC</text>
<text x="536.30" y="147.00" text-anchor="end">MODULE)</text>
<text transform="translate(546.00 145.60) rotate(-90)" text-anchor="middle">A</text>
<text transform="translate(579.00 145.60) rotate(-90)" text-anchor="middle">B</text>
<text transform="translate(545.00 172.50) rotate(-90)" text-anchor="middle">BLK</text>
<text transform="translate(579.00 172.50) rotate(-90)" text-anchor="middle">BLK</text>
<text transform="translate(579.00 211.80) rotate(-90)" text-anchor="middle">LT GRN</text>
<text x="502.50" y="195.00">DK GRN</text>
<text x="690.80" y="99.00" text-anchor="middle">(BOTTOM CENTER OF HVAC MODULE)</text>
<text x="690.30" y="107.00" text-anchor="middle" fill="#6089ca">BLOWER MOTOR CONTROL MODULE</text>
<text transform="translate(666.00 156.30) rotate(-90)">SPD CTRL</text>
<text transform="translate(689.00 156.30) rotate(-90)">GND</text>
<text transform="translate(700.00 156.30) rotate(-90)">B+</text>
<text transform="translate(734.00 156.30) rotate(-90)">B+</text>
<text transform="translate(747.00 156.30) rotate(-90)">LOW REF</text>
<text transform="translate(638.00 180.00) rotate(-90)" text-anchor="middle">1</text>
<text transform="translate(650.00 180.00) rotate(-90)" text-anchor="middle">2</text>
<text transform="translate(661.00 180.00) rotate(-90)" text-anchor="middle">3</text>
<text transform="translate(673.00 180.00) rotate(-90)" text-anchor="middle">4</text>
<text transform="translate(684.00 180.00) rotate(-90)" text-anchor="middle">5</text>
<text transform="translate(696.00 180.00) rotate(-90)" text-anchor="middle">6</text>
<text transform="translate(730.00 180.00) rotate(-90)" text-anchor="middle">1</text>
<text transform="translate(741.00 180.00) rotate(-90)" text-anchor="middle">2</text>
<text transform="translate(708.00 181.20) rotate(-90)" text-anchor="middle" fill="#6089ca" text-decoration="underline">X2</text>
<text transform="translate(753.00 181.20) rotate(-90)" text-anchor="middle" fill="#6089ca" text-decoration="underline">X1</text>
<text transform="translate(660.00 216.30) rotate(-90)" text-anchor="middle">PPL/WHT</text>
<text transform="translate(672.00 232.00) rotate(-90)" text-anchor="middle">754</text>
<text transform="translate(683.00 207.50) rotate(-90)" text-anchor="middle">BLK</text>
<text transform="translate(695.00 207.50) rotate(-90)" text-anchor="middle">RED</text>
<text transform="translate(695.00 233.00) rotate(-90)" text-anchor="middle">1050</text>
<text transform="translate(708.00 232.00) rotate(-90)" text-anchor="middle">542</text>
<text transform="translate(730.00 207.50) rotate(-90)" text-anchor="middle">PPL</text>
<text transform="translate(741.00 207.50) rotate(-90)" text-anchor="middle">BLK</text>
<text transform="translate(741.00 230.00) rotate(-90)" text-anchor="middle">65</text>
<text transform="translate(753.00 233.80) rotate(-90)" text-anchor="middle">2150</text>
<text x="852.00" y="113.00" text-anchor="end">(UNDER RIGHT SIDE</text>
<text x="852.00" y="122.00" text-anchor="end">OF HVAC MODULE)</text>
<text x="819.30" y="130.00" text-anchor="middle">BLOWER MOTOR</text>
<text transform="translate(799.00 180.00) rotate(-90)" text-anchor="middle">B</text>
<text transform="translate(834.00 180.00) rotate(-90)" text-anchor="middle">A</text>
<text transform="translate(799.00 207.50) rotate(-90)" text-anchor="middle">BLK</text>
<text transform="translate(834.00 207.50) rotate(-90)" text-anchor="middle">PPL</text>
<text x="765.80" y="292.00" fill="#6089ca">G200</text>
<text x="780.00" y="301.00" text-anchor="end">(RIGHT FRONT</text>
<text x="782.00" y="309.00" text-anchor="end">OF HVAC CASE)</text>
<text x="264.60" y="253.00" text-anchor="end" fill="#6089ca">LEFT I/P</text>
<text x="266.50" y="262.00" text-anchor="end" fill="#6089ca">JUNCTION BLOCK</text>
<text x="264.50" y="270.00" text-anchor="end">(LEFT END</text>
<text x="266.50" y="279.00" text-anchor="end">OF DASH)</text>
<text transform="translate(280.00 285.50) rotate(-90)" text-anchor="middle">L4</text>
<text transform="translate(290.00 285.50) rotate(-90)" text-anchor="middle">M4</text>
<text transform="translate(325.00 285.50) rotate(-90)" text-anchor="middle">P5</text>
<text transform="translate(371.00 285.50) rotate(-90)" text-anchor="middle">K2</text>
<text transform="translate(383.00 285.50) rotate(-90)" text-anchor="middle">E3</text>
<text transform="translate(394.00 285.50) rotate(-90)" text-anchor="middle">K1</text>
<text transform="translate(406.00 285.50) rotate(-90)" text-anchor="middle" fill="#6089ca" text-decoration="underline">X1</text>
<text transform="translate(417.00 283.80) rotate(-90)" text-anchor="middle">3</text>
<text transform="translate(430.00 287.00) rotate(-90)" text-anchor="middle" fill="#6089ca" text-decoration="underline">X11</text>
<text transform="translate(440.00 285.50) rotate(-90)" text-anchor="middle">C1</text>
<text transform="translate(453.00 285.00) rotate(-90)" text-anchor="middle" fill="#6089ca" text-decoration="underline">X1</text>
<text transform="translate(290.00 313.80) rotate(-90)" text-anchor="middle">DK GRN</text>
<text transform="translate(325.00 313.80) rotate(-90)" text-anchor="middle">DK GRN</text>
<text transform="translate(371.00 316.30) rotate(-90)" text-anchor="middle">BLK/WHT</text>
<text transform="translate(383.00 316.30) rotate(-90)" text-anchor="middle">BLK/WHT</text>
<text transform="translate(394.00 316.30) rotate(-90)" text-anchor="middle">BLK/WHT</text>
<text transform="translate(417.00 308.00) rotate(-90)" text-anchor="middle">PNK</text>
<text transform="translate(440.00 308.00) rotate(-90)" text-anchor="middle">PNK</text>
<text x="366.80" y="408.00" text-anchor="middle" fill="#6089ca">G201</text>
<text x="373.00" y="417.00" text-anchor="end">(LEFT END</text>
<text x="375.00" y="425.00" text-anchor="end">OF DASH)</text>
<text x="774.30" y="333.00" text-anchor="end">BLK/WHT</text>
<text x="794.50" y="333.00" text-anchor="middle">C</text>
<text x="774.30" y="344.00" text-anchor="end">GRY</text>
<text x="794.50" y="344.00" text-anchor="middle">B</text>
<text x="774.30" y="391.00" text-anchor="end">LT BLU/BLK</text>
<text x="794.50" y="391.00" text-anchor="middle">A</text>
<text x="852.00" y="412.00" text-anchor="end" fill="#6089ca">AMBIENT LIGHT/</text>
<text x="851.60" y="421.00" text-anchor="end" fill="#6089ca">SUNLOAD SENSOR</text>
<text x="853.80" y="429.00" text-anchor="end" fill="#6089ca">ASSEMBLY</text>
<text x="852.00" y="437.00" text-anchor="end">(CENTER</text>
<text x="853.80" y="446.00" text-anchor="end">OF DASH)</text>
<text x="77.50" y="287.00" text-anchor="middle">RIGHT</text>
<text x="78.00" y="295.00" text-anchor="middle">TEMPERATURE</text>
<text x="78.00" y="304.00" text-anchor="middle">CONTROL</text>
<text x="77.50" y="356.00" text-anchor="middle">LEFT</text>
<text x="78.00" y="365.00" text-anchor="middle">TEMPERATURE</text>
<text x="78.00" y="373.00" text-anchor="middle">CONTROL</text>
<text x="79.30" y="431.00" text-anchor="middle">A/C ON</text>
<text x="79.30" y="439.00" text-anchor="middle">IND</text>
<text x="79.30" y="514.00" text-anchor="middle">A/C ON</text>
<text x="79.80" y="522.00" text-anchor="middle">SWITCH</text>
<text x="80.00" y="567.00" text-anchor="middle" fill="#6089ca">REAR</text>
<text x="80.00" y="576.00" text-anchor="middle" fill="#6089ca">DEFOGGER</text>
<text x="80.50" y="584.00" text-anchor="middle" fill="#6089ca">IND</text>
<text x="80.00" y="615.00" text-anchor="middle" fill="#6089ca">FRONT</text>
<text x="80.00" y="624.00" text-anchor="middle" fill="#6089ca">DEFOGGER</text>
<text x="80.00" y="632.00" text-anchor="middle" fill="#6089ca">IND</text>
<text x="80.00" y="664.00" text-anchor="middle">RECIRCU-</text>
<text x="80.50" y="673.00" text-anchor="middle">LATION IND</text>
<text x="79.50" y="707.00" text-anchor="middle">FRESH</text>
<text x="80.00" y="716.00" text-anchor="middle">AIR IND</text>
<text x="62.50" y="758.00">MODE</text>
<text x="62.50" y="767.00">DOWN</text>
<text x="161.30" y="304.00" text-anchor="end">AIR TMP</text>
<text x="161.30" y="339.00" text-anchor="end">AIR TEMP</text>
<text x="161.30" y="350.00" text-anchor="end">PASS SUNLD</text>
<text x="161.30" y="362.00" text-anchor="end">SNS SIG</text>
<text x="161.30" y="373.00" text-anchor="end">SNS SIG</text>
<text x="161.30" y="385.00" text-anchor="end">SW SIG</text>
<text x="161.30" y="454.00" text-anchor="end">SNS SIG</text>
<text x="161.30" y="466.00" text-anchor="end">LF SUNLD</text>
<text x="161.30" y="477.00" text-anchor="end">L AIR TMP</text>
<text x="161.30" y="489.00" text-anchor="end">R AIR TMP</text>
<text x="161.30" y="501.00" text-anchor="end">MODE CNTRL</text>
<text x="161.30" y="547.00" text-anchor="end">B(+)</text>
<text x="161.30" y="582.00" text-anchor="end">AMB TMP</text>
<text x="161.30" y="593.00" text-anchor="end">GMLAN L</text>
<text x="161.30" y="605.00" text-anchor="end">LW PRSS</text>
<text x="161.30" y="628.00" text-anchor="end">GROUND</text>
<text x="161.30" y="639.00" text-anchor="end">IGN VOLT</text>
<text x="161.30" y="651.00" text-anchor="end">RER DEFG</text>
<text x="161.30" y="709.00" text-anchor="end">GROUND</text>
<text x="161.30" y="721.00" text-anchor="end">LOW REF</text>
<text x="161.30" y="744.00" text-anchor="end">SENS SIG</text>
<text x="161.30" y="755.00" text-anchor="end">DFRST VAL</text>
<text x="161.30" y="767.00" text-anchor="end">RECIRC</text>
<text x="190.30" y="299.00">1</text>
<text x="190.30" y="310.00">2</text>
<text x="190.30" y="322.00">3</text>
<text x="190.30" y="333.00">4</text>
<text x="190.30" y="345.00">5</text>
<text x="190.30" y="357.00">6</text>
<text x="190.30" y="368.00">7</text>
<text x="190.30" y="380.00">8</text>
<text x="190.30" y="391.00">9</text>
<text x="190.30" y="403.00">10</text>
<text x="190.30" y="414.00">11</text>
<text x="190.30" y="426.00">12</text>
<text x="190.30" y="437.00">13</text>
<text x="190.30" y="449.00">14</text>
<text x="190.30" y="460.00">15</text>
<text x="190.30" y="472.00">16</text>
<text x="190.30" y="484.00">17</text>
<text x="190.30" y="495.00">18</text>
<text x="190.30" y="507.00">19</text>
<text x="190.30" y="518.00">20</text>
<text x="190.30" y="541.00">1</text>
<text x="190.30" y="553.00">2</text>
<text x="190.30" y="564.00">3</text>
<text x="190.30" y="576.00">4</text>
<text x="190.30" y="588.00">5</text>
<text x="190.30" y="599.00">6</text>
<text x="190.30" y="611.00">7</text>
<text x="190.30" y="622.00">8</text>
<text x="190.30" y="634.00">9</text>
<text x="190.30" y="645.00">10</text>
<text x="190.30" y="657.00">11</text>
<text x="190.30" y="669.00">12</text>
<text x="190.30" y="680.00">13</text>
<text x="190.30" y="692.00">14</text>
<text x="190.30" y="703.00">15</text>
<text x="190.30" y="715.00">16</text>
<text x="190.30" y="738.00">1</text>
<text x="190.30" y="749.00">2</text>
<text x="190.30" y="761.00">3</text>
<text x="190.40" y="530.00" fill="#6089ca" text-decoration="underline">X1</text>
<text x="190.40" y="727.00" fill="#6089ca" text-decoration="underline">X2</text>
<text x="201.60" y="299.00">WHT/BLK</text>
<text x="255.00" y="299.00">5515</text>
<text x="201.60" y="333.00">DK GRN</text>
<text x="255.00" y="333.00">734</text>
<text x="213.20" y="345.00">GRY</text>
<text x="267.20" y="345.00">1548</text>
<text x="213.20" y="357.00">BRN</text>
<text x="267.20" y="357.00">404</text>
<text x="213.20" y="368.00">LT GRN</text>
<text x="267.20" y="368.00">405</text>
<text x="213.20" y="380.00">PNK</text>
<text x="267.20" y="380.00">2145</text>
<text x="213.20" y="449.00">DK GRN</text>
<text x="267.20" y="449.00">5518</text>
<text x="213.20" y="460.00">LT BLU/BLK</text>
<text x="267.20" y="460.00">590</text>
<text x="213.20" y="472.00">TAN</text>
<text x="267.20" y="472.00">516</text>
<text x="213.20" y="484.00">TAN</text>
<text x="267.20" y="484.00">517</text>
<text x="213.20" y="495.00">GRY</text>
<text x="267.20" y="495.00">2599</text>
<text x="213.20" y="541.00">RED/WHT</text>
<text x="267.20" y="541.00">3340</text>
<text x="213.20" y="576.00">LT GRN/BLK</text>
<text x="267.20" y="576.00">735</text>
<text x="213.20" y="588.00">DK GRN</text>
<text x="267.20" y="588.00">5060</text>
<text x="213.20" y="599.00">DK BLU</text>
<text x="267.20" y="599.00">204</text>
<text x="213.20" y="622.00">BLK/WHT</text>
<text x="267.20" y="622.00">1851</text>
<text x="213.20" y="634.00">ORG</text>
<text x="255.00" y="634.00">300</text>
<text x="213.20" y="645.00">WHT</text>
<text x="255.00" y="645.00">193</text>
<text x="213.20" y="703.00">BLK</text>
<text x="255.00" y="703.00">1050</text>
<text x="213.20" y="715.00">DK GRN</text>
<text x="255.00" y="715.00">6101</text>
<text x="213.20" y="738.00">TAN</text>
<text x="255.00" y="738.00">518</text>
<text x="213.20" y="749.00">YEL/BLK</text>
<text x="255.00" y="749.00">713</text>
<text x="213.20" y="761.00">PPL</text>
<text x="255.00" y="761.00">1838</text>
<text x="300.80" y="589.00" fill="#6089ca">COMPUTER DATA</text>
<text x="300.80" y="598.00" fill="#6089ca">LINES SYSTEM</text>
<text x="288.80" y="640.00" fill="#6089ca">POWER DISTRIBUTION SYSTEM</text>
<text x="288.80" y="651.00" fill="#6089ca">DEFOGGER SYSTEM</text>
<text x="291.80" y="700.00" text-anchor="middle">J203</text>
<text x="315.30" y="704.00" text-anchor="middle">BLK</text>
<text x="345.80" y="683.00">(RIGHT</text>
<text x="345.80" y="691.00">FRONT OF</text>
<text x="345.80" y="699.00">HVAC CASE)</text>
<text x="346.30" y="708.00" fill="#6089ca">G200</text>
<text x="853.00" y="495.00" text-anchor="end">PNK</text>
<text x="868.60" y="501.00" text-anchor="middle">1</text>
<text x="853.00" y="506.00" text-anchor="end">GRY</text>
<text x="868.60" y="512.00" text-anchor="middle">2</text>
<text x="853.00" y="518.00" text-anchor="end">RED</text>
<text x="868.60" y="524.00" text-anchor="middle">3</text>
<text x="853.00" y="530.00" text-anchor="end">PPL/WHT</text>
<text x="868.60" y="536.00" text-anchor="middle">4</text>
<text x="853.00" y="540.00" text-anchor="end">RED/WHT</text>
<text x="868.60" y="546.00" text-anchor="middle">5</text>
<text x="853.00" y="553.00" text-anchor="end">DK GRN</text>
<text x="868.60" y="559.00" text-anchor="middle">6</text>
<text x="853.00" y="564.00" text-anchor="end">PNK</text>
<text x="868.60" y="570.00" text-anchor="middle">7</text>
<text x="853.00" y="576.00" text-anchor="end">DK GRN</text>
<text x="868.60" y="582.00" text-anchor="middle">8</text>
<text x="853.00" y="587.00" text-anchor="end">PNK</text>
<text x="868.60" y="593.00" text-anchor="middle">9</text>
<text x="853.00" y="738.00" text-anchor="end">TAN</text>
<text x="868.60" y="744.00" text-anchor="middle">10</text>
<text x="853.00" y="749.00" text-anchor="end">YEL/BLK</text>
<text x="868.60" y="755.00" text-anchor="middle">11</text>
<text x="853.00" y="761.00" text-anchor="end">PPL</text>
<text x="868.60" y="767.00" text-anchor="middle">12</text>
</g>
<path d="M38.1 800 V81.4 H877 V800" fill="none" stroke="#000" stroke-width="1.5"/>
</svg></div>
</body></html>
